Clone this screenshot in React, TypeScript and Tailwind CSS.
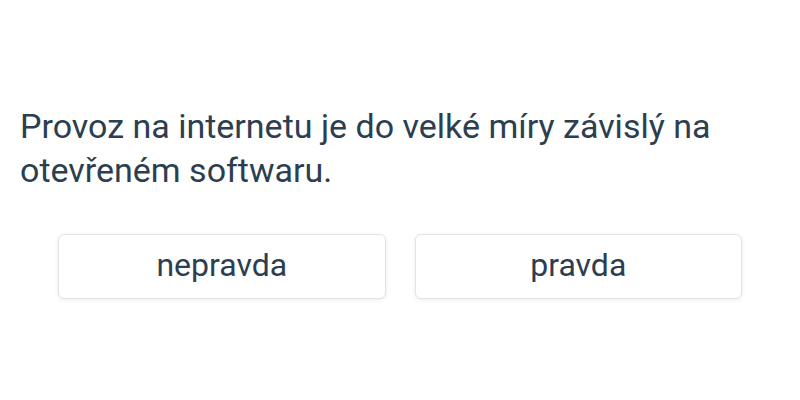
export default function App() {
  return (
    <div className="w-[800px] h-[400px] bg-white px-5 pt-[104px]" style={{ fontFamily: "Roboto, sans-serif" }}>
      <p className="text-[34px] leading-[44px] text-[#2c3e50]">
        Provoz na internetu je do velké míry závislý na otevřeném softwaru.
      </p>
      <div className="mt-[42px] px-[38px] grid grid-cols-2 gap-[29px]">
        <button className="h-[65px] pb-[3px] rounded-md border border-[#e3e3e3] bg-white shadow-[0_1px_4px_rgba(0,0,0,0.08)] text-[32px] text-[#2c3e50]">
          nepravda
        </button>
        <button className="h-[65px] pb-[3px] rounded-md border border-[#e3e3e3] bg-white shadow-[0_1px_4px_rgba(0,0,0,0.08)] text-[32px] text-[#2c3e50]">
          pravda
        </button>
      </div>
    </div>
  );
}
